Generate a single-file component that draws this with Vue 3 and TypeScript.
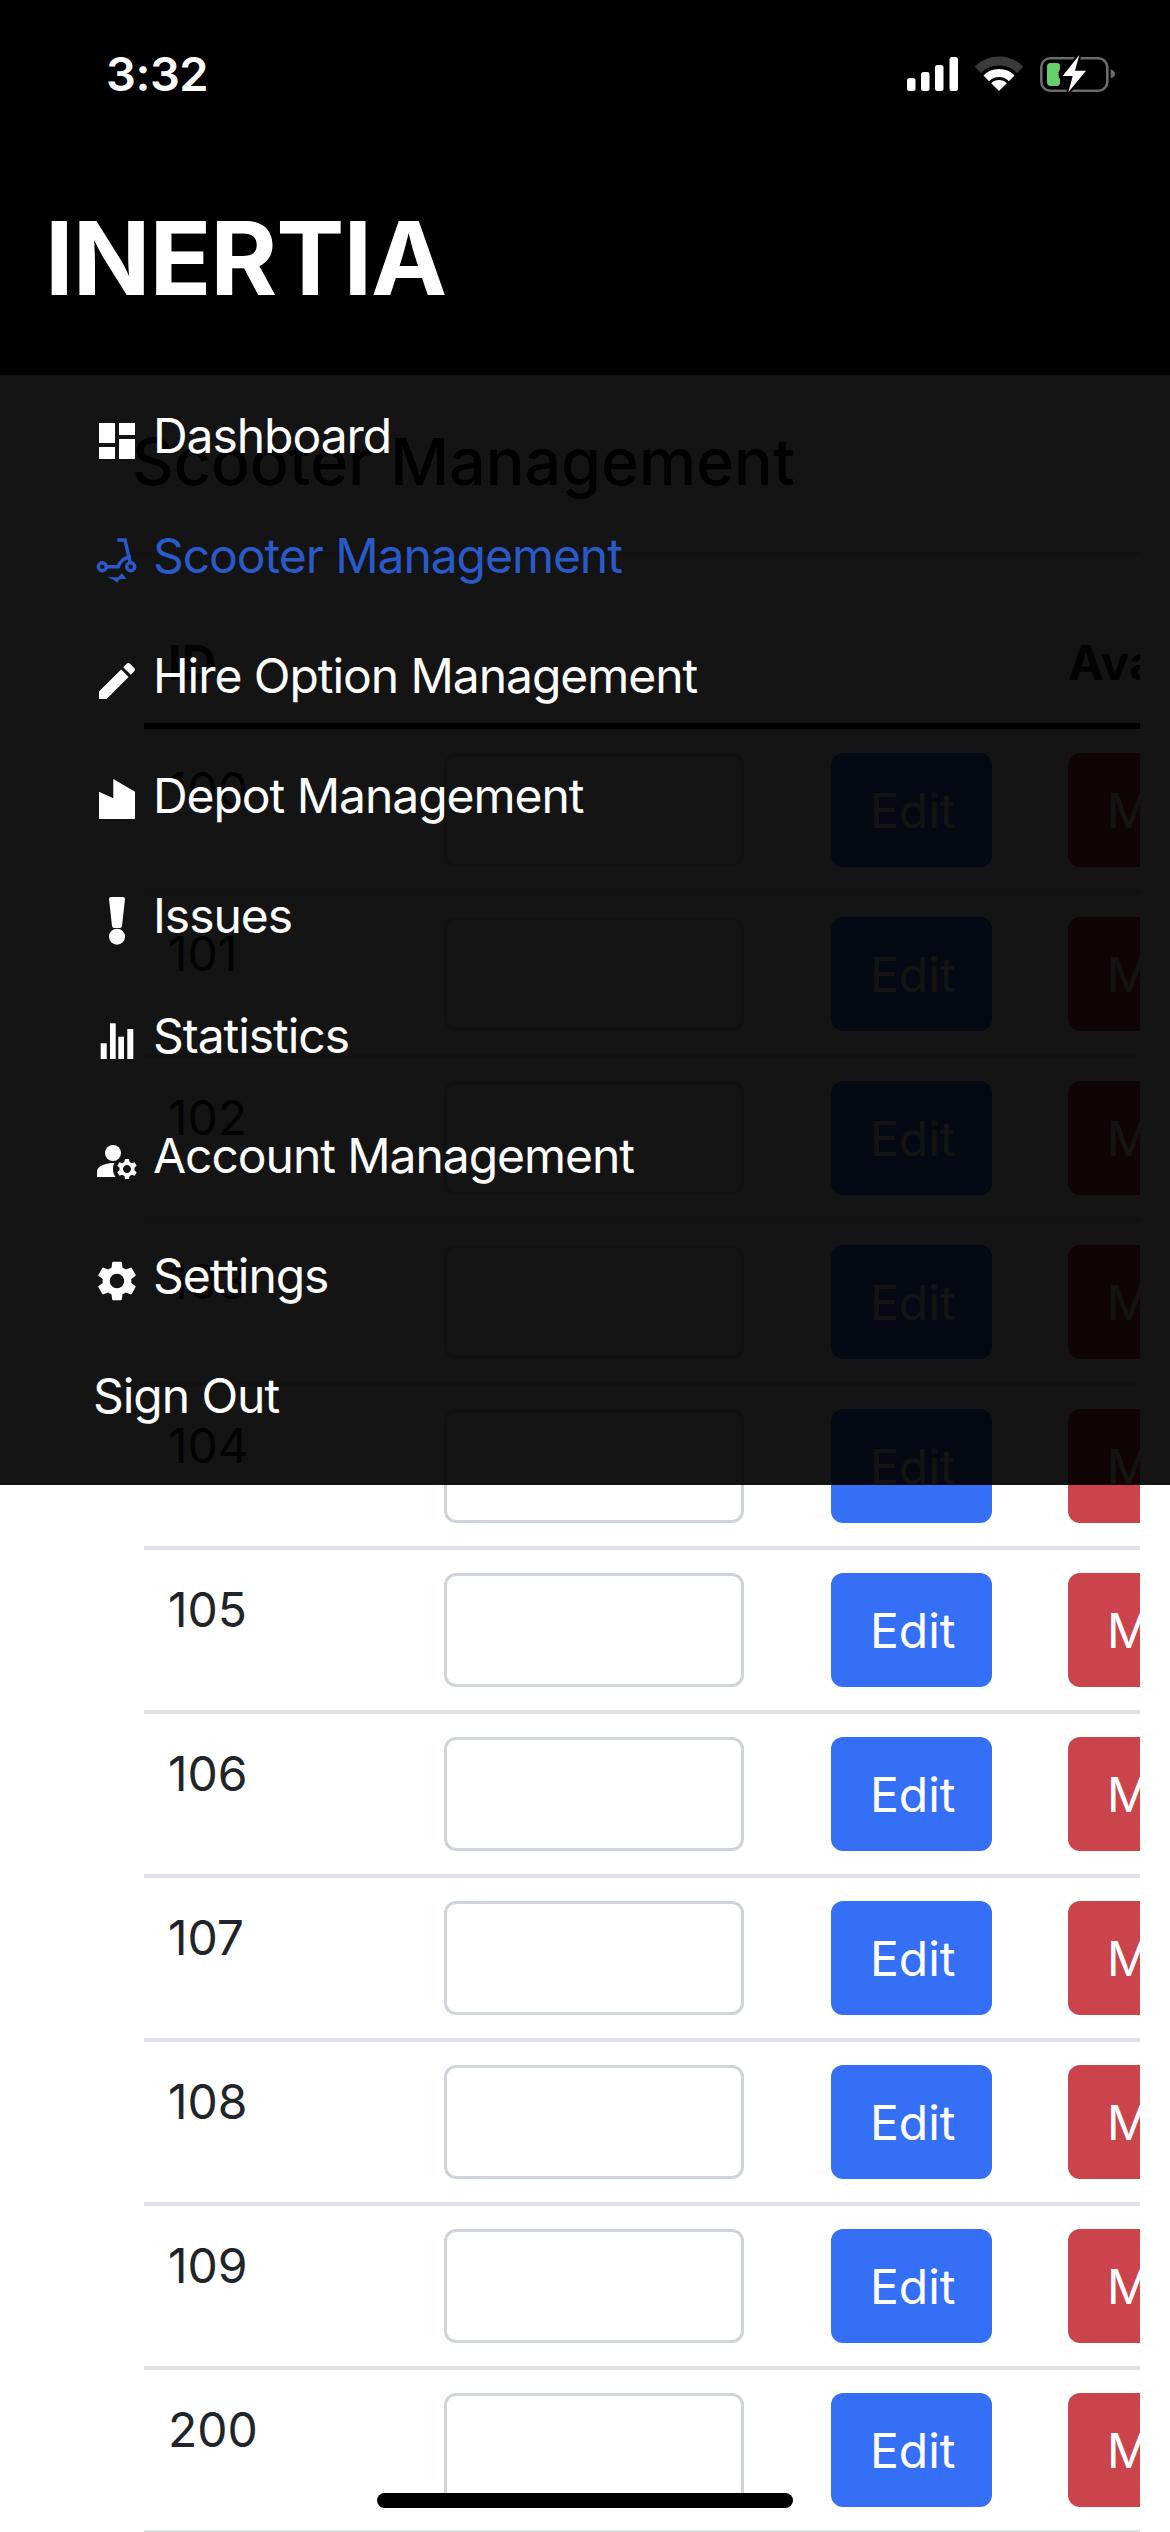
<template>
  <div class="page">
    <header class="top">
      <div class="status">
        <span class="time">3:32</span>
        <div class="status-icons">
          <svg width="51" height="34" viewBox="0 0 51 34">
            <rect x="0" y="21" width="8.5" height="13" rx="2.5" fill="#fff" />
            <rect x="14" y="15" width="8.5" height="19" rx="2.5" fill="#fff" />
            <rect x="28" y="8" width="8.5" height="26" rx="2.5" fill="#fff" />
            <rect x="42.5" y="0" width="8.5" height="34" rx="2.5" fill="#fff" />
          </svg>
          <svg width="48" height="38" viewBox="0 0 48 38">
            <path d="M2.8 14.8A30 30 0 0 1 45.2 14.8" fill="none" stroke="#3a3a3a" stroke-width="9" />
            <path d="M11.3 23.3A18 18 0 0 1 36.7 23.3" fill="none" stroke="#fff" stroke-width="8" />
            <path d="M24 36L16.2 28.2A11 11 0 0 1 31.8 28.2Z" fill="#fff" />
          </svg>
          <svg width="75" height="38" viewBox="0 0 75 38">
            <rect x="1.3" y="3.3" width="66" height="32.5" rx="9" fill="none" stroke="#6b6b6b" stroke-width="2.6" />
            <path d="M70.7 14.3Q75 16 75 19Q75 22 70.7 23.3Z" fill="#6b6b6b" />
            <path d="M10.5 8H17Q20 8 20 11V14Q17 19 20 24V28Q20 31 17 31H10.5Q7 31 7 27V12Q7 8 10.5 8Z" fill="#66cf6a" />
            <path d="M39.3 0L22.7 21H32.7L28.3 37.3L46 15.7H35Z" fill="#fff" stroke="#000" stroke-width="4" paint-order="stroke" />
          </svg>
        </div>
      </div>
      <div class="brand">INERTIA</div>
    </header>

    <main class="content">
      <h1 class="title">Scooter Management</h1>
      <div class="table-wrap">
        <table class="scooters">
          <colgroup>
            <col class="c-id" />
            <col class="c-input" />
            <col class="c-edit" />
            <col class="c-mark" />
          </colgroup>
          <thead>
            <tr>
              <th>ID</th>
              <th></th>
              <th></th>
              <th>Available</th>
            </tr>
          </thead>
          <tbody>
            <tr v-for="id in scooterIds" :key="id">
              <td>{{ id }}</td>
              <td><input class="field" type="text" /></td>
              <td><button class="btn btn-blue">Edit</button></td>
              <td><button class="btn btn-red">Mark Unavailable</button></td>
            </tr>
          </tbody>
        </table>
      </div>
    </main>

    <nav class="menu">
      <a v-for="item in navItems" :key="item.label" class="menu-item" :class="{ active: item.active }">
        <svg class="menu-icon" width="48" height="48" viewBox="0 0 48 48" v-html="item.icon"></svg>
        <span>{{ item.label }}</span>
      </a>
      <a class="menu-item">Sign Out</a>
    </nav>

    <div class="home-bar"></div>
  </div>
</template>

<script setup lang="ts">
const scooterIds = [100, 101, 102, 103, 104, 105, 106, 107, 108, 109, 200]

const scaled = (d: string) => `<path transform="scale(2)" fill="currentColor" d="${d}" />`

const navItems = [
  {
    label: 'Dashboard',
    icon: scaled('M3 13h8V3H3v10zm0 8h8v-6H3v6zm10 0h8V11h-8v10zm0-18v6h8V3h-8z')
  },
  {
    label: 'Scooter Management',
    active: true,
    icon: `<g fill="none" stroke="currentColor" stroke-width="3.4">
      <circle cx="9.3" cy="29.7" r="4" />
      <circle cx="37.7" cy="29.7" r="4" />
      <path d="M24.3 3H32L37 25" />
      <path d="M13.5 29.7H25.3C27 24 31 20.5 38 19.7" />
    </g>
    <path fill="currentColor" d="M14.3 40.3H25.3L28.7 36.3L33.7 41.7L26.3 42.3L24.3 45.7L21 43Z" />`
  },
  {
    label: 'Hire Option Management',
    icon: scaled('M3 17.25V21h3.75L17.81 9.94l-3.75-3.75L3 17.25zM20.71 7.04c.39-.39.39-1.02 0-1.41l-2.34-2.34c-.39-.39-1.02-.39-1.41 0l-1.83 1.83 3.75 3.75 1.83-1.83z')
  },
  {
    label: 'Depot Management',
    icon: '<path fill="currentColor" d="M6 14.7L20.3 21.3V2L42 14.7V42H6Z" />'
  },
  {
    label: 'Issues',
    icon: `<path fill="currentColor" d="M18 0H30Q32 0 32 2L29 29Q28.5 31 27 31H21Q19.5 31 19 29L16 2Q16 0 18 0Z" />
      <circle cx="24" cy="39.7" r="8" fill="currentColor" />`
  },
  {
    label: 'Statistics',
    icon: `<g fill="currentColor">
      <rect x="7.7" y="26.3" width="6" height="15.7" />
      <rect x="17" y="6.3" width="5.7" height="35.7" />
      <rect x="25.3" y="19.7" width="5.7" height="22.3" />
      <rect x="34.3" y="12" width="6" height="30" />
    </g>`
  },
  {
    label: 'Account Management',
    icon: `<g transform="scale(2)" fill="currentColor">
      <circle cx="10" cy="8" r="4" />
      <path d="M10.67 13.02C10.45 13.01 10.23 13 10 13c-2.42 0-4.68.67-6.61 1.82-.88.52-1.39 1.5-1.39 2.53V20h9.26c-.79-1.13-1.26-2.51-1.26-4 0-1.07.25-2.07.67-2.98z" />
      <path d="M20.75 16c0-.22-.03-.42-.06-.63l1.14-1.01-1-1.73-1.45.49c-.32-.27-.68-.48-1.08-.63L18 11h-2l-.3 1.49c-.4.15-.76.36-1.08.63l-1.45-.49-1 1.73 1.14 1.01c-.03.21-.06.41-.06.63s.03.42.06.63l-1.14 1.01 1 1.73 1.45-.49c.32.27.68.48 1.08.63L16 21h2l.3-1.49c.4-.15.76-.36 1.08-.63l1.45.49 1-1.73-1.14-1.01c.03-.21.06-.41.06-.63zM17 18c-1.1 0-2-.9-2-2s.9-2 2-2 2 .9 2 2-.9 2-2 2z" />
    </g>`
  },
  {
    label: 'Settings',
    icon: scaled('M19.14 12.94c.04-.3.06-.61.06-.94 0-.32-.02-.64-.07-.94l2.03-1.58c.18-.14.23-.41.12-.61l-1.92-3.32c-.12-.22-.37-.29-.59-.22l-2.39.96c-.5-.38-1.03-.7-1.62-.94l-.36-2.54c-.04-.24-.24-.41-.48-.41h-3.84c-.24 0-.43.17-.47.41l-.36 2.54c-.59.24-1.13.57-1.62.94l-2.39-.96c-.22-.08-.47 0-.59.22L2.74 8.87c-.12.21-.08.47.12.61l2.03 1.58c-.05.3-.09.63-.09.94s.02.64.07.94l-2.03 1.58c-.18.14-.23.41-.12.61l1.92 3.32c.12.22.37.29.59.22l2.39-.96c.5.38 1.03.7 1.62.94l.36 2.54c.05.24.24.41.48.41h3.84c.24 0 .44-.17.47-.41l.36-2.54c.59-.24 1.13-.56 1.62-.94l2.39.96c.22.08.47 0 .59-.22l1.92-3.32c.12-.22.07-.47-.12-.61l-2.01-1.58zM12 15.6c-1.98 0-3.6-1.62-3.6-3.6s1.62-3.6 3.6-3.6 3.6 1.62 3.6 3.6-1.62 3.6-3.6 3.6z')
  }
]
</script>

<style>
html,
body {
  margin: 0;
  background: #fff;
}
</style>

<style scoped>
.page {
  position: relative;
  width: 1170px;
  height: 2532px;
  overflow: hidden;
  background: #fff;
  color: #212529;
  font-family: Inter, "Liberation Sans", sans-serif;
  font-size: 48px;
  line-height: 72px;
}

.top {
  height: 375px;
  box-sizing: border-box;
  background: #000;
  color: #fff;
}

.status {
  display: flex;
  justify-content: space-between;
  align-items: flex-start;
  padding: 55px 55px 0 106px;
}

.time {
  font-size: 47px;
  font-weight: 600;
  line-height: 38px;
  letter-spacing: -0.5px;
}

.status-icons {
  display: flex;
  gap: 17px;
  align-items: flex-start;
}

.status-icons svg:first-child {
  margin-top: 2px;
}

.brand {
  margin-top: 105px;
  padding-left: 45px;
  font-size: 102px;
  font-weight: 700;
  line-height: 120px;
  letter-spacing: -1px;
}

.content {
  padding: 0 30px 0 132px;
}

.title {
  margin: 0 0 48px;
  padding: 44px 0 47px;
  border-bottom: 3px solid #dee2e6;
  font-size: 64.5px;
  font-weight: 500;
  line-height: 86px;
  color: #000;
}

.table-wrap {
  margin-left: 12px;
  overflow: hidden;
}

.scooters {
  width: 1300px;
  table-layout: fixed;
  border-collapse: separate;
  border-spacing: 0;
}

.c-id {
  width: 276px;
}

.c-input {
  width: 387px;
}

.c-edit {
  width: 237px;
}

.scooters th {
  padding: 24px 24px 24px;
  border-bottom: 6px solid #000;
  text-align: left;
  font-weight: 700;
  white-space: nowrap;
}

.scooters td {
  padding: 23px 24px;
  border-bottom: 4px solid #dfe1e6;
  vertical-align: top;
  line-height: 74px;
}

.scooters tbody tr:first-child td {
  padding-top: 24px;
}

.field {
  display: block;
  width: 300px;
  height: 114px;
  box-sizing: border-box;
  border: 3px solid #ced4da;
  border-radius: 12px;
  background: #fff;
}

.btn {
  display: block;
  height: 114px;
  box-sizing: border-box;
  padding: 2px 39px 0;
  border: 0;
  border-radius: 12px;
  color: #fff;
  font: inherit;
  white-space: nowrap;
}

.btn-blue {
  width: 161px;
  background: #346ff5;
}

.btn-red {
  background: #cb444b;
}

.menu {
  position: absolute;
  top: 375px;
  left: 0;
  right: 0;
  display: flex;
  flex-direction: column;
  padding: 1px 0 29px 93px;
  background: rgba(0, 0, 0, 0.92);
  color: #fff;
  letter-spacing: -1.05px;
}

.menu-item {
  display: flex;
  align-items: center;
  gap: 12px;
  height: 120px;
}

.menu-item.active {
  color: #2a5ac8;
}

.menu-icon {
  flex: none;
  margin-top: 10px;
}

.home-bar {
  position: absolute;
  left: 377px;
  top: 2493px;
  width: 416px;
  height: 15px;
  border-radius: 8px;
  background: #000;
}
</style>
